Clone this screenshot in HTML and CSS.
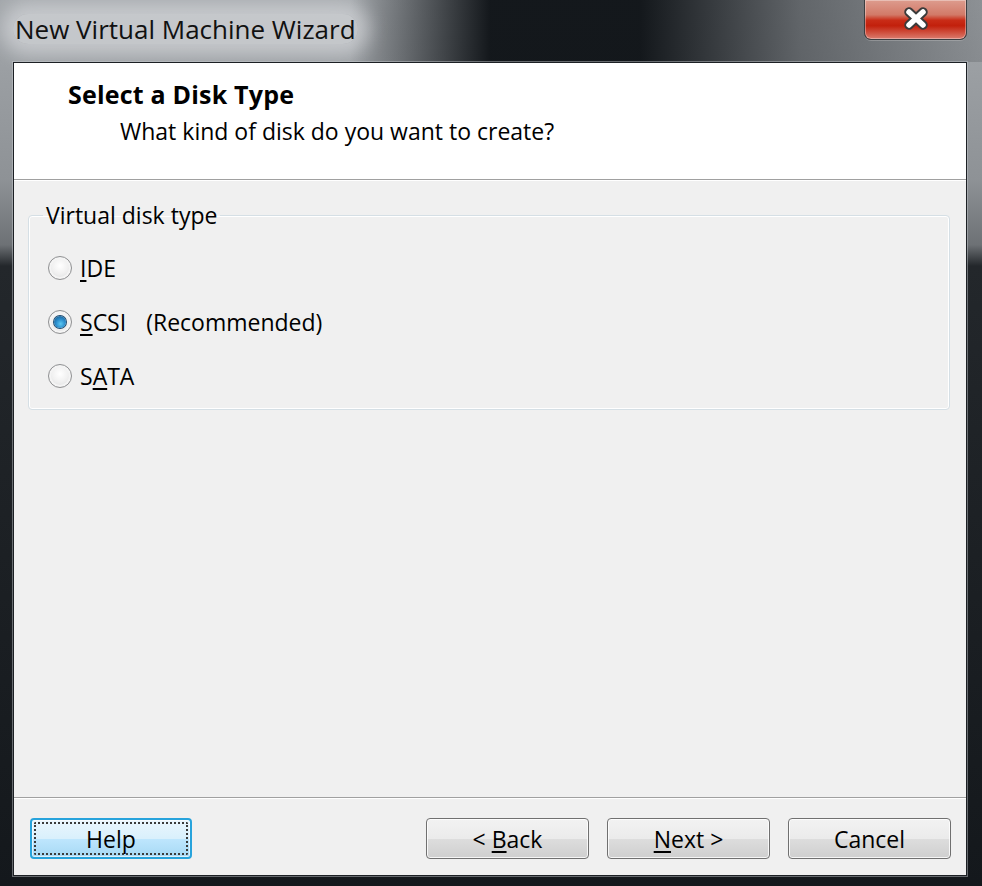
FILE: index.html
```html
<!DOCTYPE html>
<html>
<head>
<meta charset="utf-8">
<title>New Virtual Machine Wizard</title>
<link rel="stylesheet" href="styles.css">
</head>
<body>
<div class="window">
  <div class="titlebar">
    <span class="title">New Virtual Machine Wizard</span>
    <div class="close">
      <svg class="close-x" width="34" height="26" viewBox="0 0 34 26">
        <path d="M10 6 L24 19 M24 6 L10 19" stroke="#3b3b3b" stroke-width="9.5" stroke-linecap="round" fill="none"/>
        <path d="M10 6 L24 19 M24 6 L10 19" stroke="#ffffff" stroke-width="5.5" stroke-linecap="round" fill="none"/>
      </svg>
    </div>
  </div>
  <div class="client">
    <div class="header">
      <div class="h-title">Select a Disk Type</div>
      <div class="h-sub">What kind of disk do you want to create?</div>
    </div>
    <div class="etch"></div>
    <div class="main">
      <fieldset class="group">
        <legend class="legend">Virtual disk type</legend>
        <div class="row"><span class="radio"></span><span class="lbl"><span class="ak">I</span>DE</span></div>
        <div class="row"><span class="radio checked"></span><span class="lbl"><span class="ak">S</span>CSI</span><span class="note">(Recommended)</span></div>
        <div class="row"><span class="radio"></span><span class="lbl">S<span class="ak">A</span>TA</span></div>
      </fieldset>
    </div>
    <div class="etch"></div>
    <div class="footer">
      <div class="btn default"><span class="focus">Help</span></div>
      <div class="spacer"></div>
      <div class="btn"><span class="cap">&lt; <span class="ak">B</span>ack</span></div>
      <div class="btn"><span class="cap"><span class="ak">N</span>ext &gt;</span></div>
      <div class="btn"><span class="cap">Cancel</span></div>
    </div>
  </div>
</div>
</body>
</html>
```

FILE: styles.css
```css
html, body {
  margin: 0;
  padding: 0;
  background: #1b1f23;
}

.window {
  width: 982px;
  height: 886px;
  box-sizing: border-box;
  padding: 0 15px 10px 13px;
  display: flex;
  flex-direction: column;
  font-family: "Open Sans", "Noto Sans", sans-serif;
  color: #000;
  background:
    linear-gradient(to bottom, #a3a7ab 0, #8e9296 180px, #6d7175 245px, #23272b 266px, #14181c 100%);
}

.titlebar {
  height: 62px;
  flex: none;
  display: flex;
  align-items: flex-start;
  margin: 0 -15px 0 -13px;
  padding: 0 15px 0 13px;
  background: linear-gradient(to right,
    rgba(150,154,158,0) 0,
    rgba(150,154,158,0) 350px,
    rgba(14,18,22,0.96) 490px,
    rgba(14,18,22,0.96) 640px,
    rgba(70,74,78,0.7) 800px,
    rgba(90,94,98,0.3) 100%);
}

.title {
  font-size: 26px;
  line-height: 30px;
  margin-top: 14px;
  padding: 0 2px 0 2px;
  border-radius: 20px;
  background: rgba(222,224,226,0.6);
  box-shadow: 0 0 18px 12px rgba(222,224,226,0.6);
  color: #111;
}

.close {
  margin-left: auto;
  width: 103px;
  height: 40px;
  box-sizing: border-box;
  border: 1px solid #3c3f42;
  border-top: none;
  border-radius: 0 0 7px 7px;
  background: linear-gradient(to bottom, #dd9c8e 0%, #d27a68 38%, #c92c17 52%, #c2200c 66%, #d35c4b 88%, #db7c6e 100%);
  box-shadow: inset 0 0 0 1px rgba(255,255,255,0.35), 0 1px 0 rgba(200,200,200,0.35);
  display: flex;
  align-items: center;
  justify-content: center;
}

.close-x {
  display: block;
  margin-top: -2px;
}

.client {
  flex: 1;
  display: flex;
  flex-direction: column;
  border: 1px solid #1c2024;
  box-shadow: 0 0 0 1px rgba(200,204,208,0.45);
  background: #f0f0f0;
}

.header {
  height: 116px;
  box-sizing: border-box;
  background: #fff;
  padding: 16px 0 0 54px;
}

.h-title {
  font-weight: bold;
  font-size: 25px;
  line-height: 30px;
  letter-spacing: 0.2px;
}

.h-sub {
  font-size: 23px;
  line-height: 30px;
  padding-left: 52px;
  margin-top: 7px;
}

.etch {
  height: 1px;
  background: #a0a0a0;
  border-bottom: 1px solid #fff;
  flex: none;
}

.main {
  flex: 1;
  padding: 20px 16px 0 14px;
}

.group {
  margin: 0;
  padding: 12px 0 6px 0;
  border: 1px solid #d5dfe5;
  border-radius: 4px;
  box-shadow: inset 0 0 0 1px #fff;
  min-inline-size: 0;
}

.legend {
  margin-left: 14px;
  padding: 0 3px;
  font-size: 23px;
  line-height: 28px;
}

.row {
  height: 54px;
  display: flex;
  align-items: center;
  font-size: 23px;
  padding-left: 19px;
}

.radio {
  width: 24px;
  height: 24px;
  box-sizing: border-box;
  border-radius: 50%;
  border: 1px solid #8f9092;
  background: radial-gradient(circle at 50% 40%, #ffffff 0, #f1f1f1 45%, #d9dadb 100%);
  box-shadow: inset 0 0 0 2px #f4f4f4;
  margin-right: 8px;
  display: flex;
  align-items: center;
  justify-content: center;
  flex: none;
}

.radio.checked::after {
  content: "";
  width: 12px;
  height: 12px;
  border-radius: 50%;
  background: radial-gradient(circle at 55% 65%, #5cc8f2 0, #2a8ccc 45%, #15507e 100%);
  box-shadow: 0 0 0 1px #1c4a70;
}

.ak {
  text-decoration: underline;
  text-underline-offset: 3px;
}

.note {
  margin-left: 20px;
}

.footer {
  height: 76px;
  box-sizing: border-box;
  padding: 19px 15px 0 16px;
  display: flex;
  align-items: flex-start;
  gap: 18px;
}

.spacer {
  flex: 1;
}

.btn {
  width: 163px;
  height: 41px;
  box-sizing: border-box;
  border: 1px solid #707070;
  border-radius: 4px;
  background: linear-gradient(to bottom, #f2f2f2 0%, #ebebeb 50%, #dddddd 51%, #cfcfcf 100%);
  box-shadow: inset 0 0 0 1px rgba(255,255,255,0.8);
  display: flex;
  align-items: center;
  justify-content: center;
  font-size: 23px;
}

.cap {
  white-space: pre;
}

.btn.default {
  width: 162px;
  border: 2px solid #27a3dc;
  background: linear-gradient(to bottom, #eaf6fd 0%, #d9f0fc 50%, #bee6fd 51%, #a7d9f5 100%);
  box-shadow: inset 0 0 0 1px rgba(255,255,255,0.6);
  padding: 2px;
}

.focus {
  flex: 1;
  align-self: stretch;
  display: flex;
  align-items: center;
  justify-content: center;
  border: 2px dotted #3a3a3a;
  border-radius: 2px;
}
```
